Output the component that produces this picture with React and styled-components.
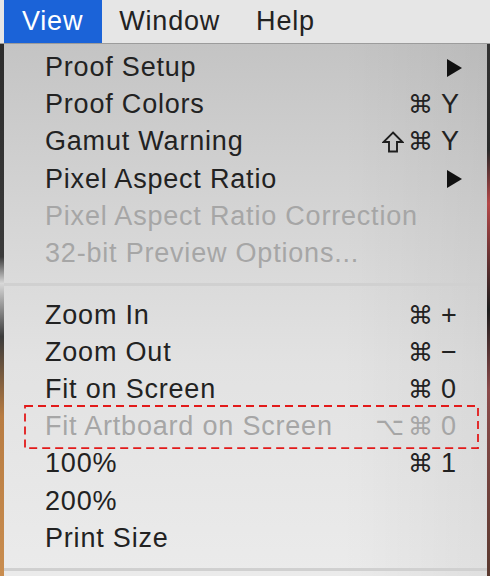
import React from 'react';
import styled, {createGlobalStyle} from 'styled-components';

const GlobalStyle = createGlobalStyle`
  html, body {
    margin: 0;
    padding: 0;
    background: #2e2e2e;
  }
  body {
    font-family: "Liberation Sans", Arial, sans-serif;
    -webkit-font-smoothing: antialiased;
  }
`;

const items = [
  {label: 'Proof Setup', sub: true},
  {label: 'Proof Colors', mods: ['cmd'], keyName: 'Y'},
  {label: 'Gamut Warning', mods: ['shift', 'cmd'], keyName: 'Y'},
  {label: 'Pixel Aspect Ratio', sub: true},
  {label: 'Pixel Aspect Ratio Correction', disabled: true},
  {label: '32-bit Preview Options...', disabled: true},
  {separator: true},
  {label: 'Zoom In', mods: ['cmd'], keyName: '+'},
  {label: 'Zoom Out', mods: ['cmd'], keyName: '−'},
  {label: 'Fit on Screen', mods: ['cmd'], keyName: '0'},
  {label: 'Fit Artboard on Screen', mods: ['opt', 'cmd'], keyName: '0', disabled: true, marked: true},
  {label: '100%', mods: ['cmd'], keyName: '1'},
  {label: '200%'},
  {label: 'Print Size'},
  {separator: true},
];

function Arrow() {
  return (
    <svg width="17" height="18" viewBox="0 0 17 18">
      <polygon points="1,0 16,9 1,18" fill="#111" />
    </svg>
  );
}

function ShiftIcon() {
  return (
    <svg width="22" height="22" viewBox="0 0 22 22">
      <polygon
        points="11,1.5 20.5,11 15,11 15,20.5 7,20.5 7,11 1.5,11"
        fill="none"
        stroke="#1e1e1e"
        strokeWidth="1.9"
        strokeLinejoin="miter"
      />
    </svg>
  );
}

function Modifier({name}) {
  if (name === 'shift') return <ShiftIcon />;
  return <ModGlyph>{name === 'cmd' ? '⌘' : '⌥'}</ModGlyph>;
}

function DashedMark() {
  return (
    <MarkBox>
      <svg width="100%" height="100%">
        <rect
          x="1"
          y="1"
          width="calc(100% - 2px)"
          height="calc(100% - 2px)"
          fill="none"
          stroke="#e21a1a"
          strokeWidth="1.8"
          strokeDasharray="8 5"
        />
      </svg>
    </MarkBox>
  );
}

function App() {
  return (
    <Page>
      <GlobalStyle />
      <MenuBar>
        <Edge />
        <MenuTitle $active>View</MenuTitle>
        <MenuTitle>Window</MenuTitle>
        <MenuTitle>Help</MenuTitle>
      </MenuBar>
      <Body>
        <LeftStrip />
        <Panel>
          {items.map((item, i) =>
            item.separator ? (
              <Separator key={i} />
            ) : (
              <Item key={i} $disabled={item.disabled}>
                {item.marked && <DashedMark />}
                <Label>{item.label}</Label>
                {item.sub && (
                  <ArrowSlot>
                    <Arrow />
                  </ArrowSlot>
                )}
                {item.keyName && (
                  <Shortcut>
                    <Mods>
                      {item.mods.map(m => (
                        <Modifier key={m} name={m} />
                      ))}
                    </Mods>
                    <KeyName>{item.keyName}</KeyName>
                  </Shortcut>
                )}
              </Item>
            )
          )}
        </Panel>
        <RightStrip />
      </Body>
    </Page>
  );
}

const Page = styled.div`
  width: 490px;
  height: 576px;
  overflow: hidden;
  display: flex;
  flex-direction: column;
`;

const MenuBar = styled.div`
  flex-shrink: 0;
  height: 43px;
  display: flex;
  align-items: stretch;
  background: #e6e6e6;
  border-bottom: 1px solid #9c9c9c;
`;

const Edge = styled.div`
  width: 4px;
`;

const MenuTitle = styled.div`
  display: flex;
  align-items: center;
  padding: ${p => (p.$active ? '0 19px 0 18px' : '0 19px 0 17px')};
  font-size: 27px;
  letter-spacing: 0.8px;
  color: ${p => (p.$active ? '#fff' : '#222')};
  background: ${p => (p.$active ? '#1b63d8' : 'transparent')};
`;

const Body = styled.div`
  flex: 1;
  min-height: 0;
  display: flex;
`;

const LeftStrip = styled.div`
  width: 4px;
  background: linear-gradient(
    to bottom,
    #2c2c2c 0%,
    #3a3a3a 40%,
    #d8d8d8 45%,
    #3b3b3b 55%,
    #b87c42 70%,
    #c98d4f 100%
  );
`;

const RightStrip = styled.div`
  width: 3px;
  background: linear-gradient(
    to bottom,
    #333 0%,
    #2a2a2a 20%,
    #b44848 30%,
    #1d1d1d 50%,
    #8a4a4a 65%,
    #5a3a30 100%
  );
`;

const Panel = styled.div`
  flex: 1;
  padding-top: 5px;
  overflow: hidden;
  background:
    linear-gradient(to right, rgba(255, 255, 255, 0) 70%, rgba(0, 0, 0, 0.05) 100%),
    linear-gradient(to bottom, #c4c4c4 0%, #d6d6d6 35%, #e2e2e2 60%, #ebebeb 100%);
`;

const Item = styled.div`
  position: relative;
  height: 37.2px;
  display: flex;
  align-items: center;
  padding: 0 24px 0 41px;
  font-size: 27px;
  letter-spacing: 0.8px;
  color: ${p => (p.$disabled ? '#a6a6a6' : '#222')};
`;

const MarkBox = styled.div`
  position: absolute;
  left: 20px;
  right: 8px;
  top: -3px;
  bottom: -4px;
  pointer-events: none;
`;

const Label = styled.span`
  flex: 1;
  white-space: nowrap;
`;

const ArrowSlot = styled.span`
  display: flex;
`;

const Shortcut = styled.span`
  display: flex;
  align-items: center;
`;

const Mods = styled.span`
  display: flex;
  align-items: center;
  gap: 4px;
`;

const ModGlyph = styled.span`
  font-family: "DejaVu Sans", sans-serif;
  font-size: 25px;
  letter-spacing: 0;
  line-height: 1;
`;

const KeyName = styled.span`
  width: 22px;
  margin-left: 8px;
  text-align: left;
  letter-spacing: 0;
`;

const Separator = styled.div`
  height: 24.5px;
  display: flex;
  align-items: center;

  &::before {
    content: '';
    flex: 1;
    height: 3px;
    background: #d0d0d0;
  }
`;

export default App;
